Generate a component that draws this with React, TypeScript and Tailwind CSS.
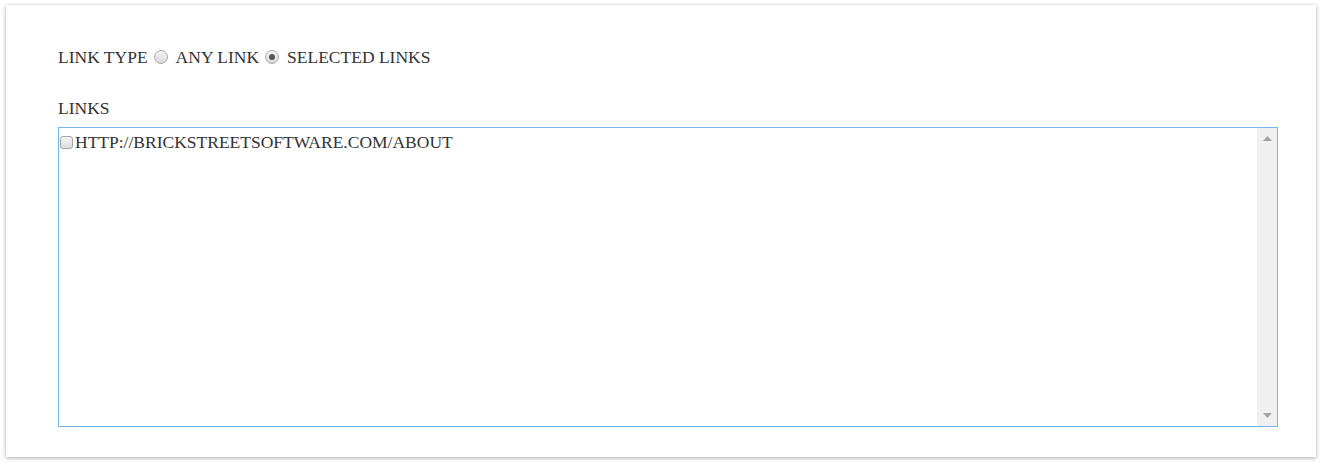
import React from "react";

function Radio({ checked }: { checked?: boolean }) {
  return (
    <span className="inline-flex items-center justify-center w-[14px] h-[14px] rounded-full border border-[#a9a9a9] bg-gradient-to-b from-[#f6f6f6] to-[#d8d8d8] ml-[6px] mr-[8px]">
      {checked && <span className="w-[6px] h-[6px] rounded-full bg-[#555]" />}
    </span>
  );
}

export default function App() {
  return (
    <div className="w-[1322px] h-[464px] bg-white pt-[5px] pl-[6px]">
      <div
        className="w-[1310px] h-[452px] bg-white shadow-[0_1px_4px_rgba(0,0,0,0.35)] pl-[52px] pr-[38px] pt-[41px] text-[#333] text-[17.5px]"
        style={{ fontFamily: '"Liberation Serif", "Times New Roman", serif' }}
      >
        <div className="flex items-center leading-[22px]">
          <span>LINK TYPE</span>
          <Radio />
          <span>ANY LINK</span>
          <Radio checked />
          <span>SELECTED LINKS</span>
        </div>
        <div className="mt-[29px] leading-[22px]">LINKS</div>
        <div className="mt-[8px] w-[1220px] h-[300px] border border-[#75b5ea] flex">
          <div className="flex-1 pt-[4px]">
            <label className="flex items-center leading-[20px]">
              <span className="w-[13px] h-[13px] mx-[1px] rounded-[3px] border border-[#a6a6a6] bg-gradient-to-b from-[#f4f4f4] to-[#dcdcdc] mr-[2px]" />
              <span>HTTP://BRICKSTREETSOFTWARE.COM/ABOUT</span>
            </label>
          </div>
          <div className="w-[20px] bg-[#f0f0f0] flex flex-col items-center justify-between py-[8px]">
            <svg width="9" height="5" viewBox="0 0 9 5">
              <polygon points="4.5,0 9,5 0,5" fill="#a3a3a3" />
            </svg>
            <svg width="9" height="5" viewBox="0 0 9 5">
              <polygon points="0,0 9,0 4.5,5" fill="#a3a3a3" />
            </svg>
          </div>
        </div>
      </div>
    </div>
  );
}
